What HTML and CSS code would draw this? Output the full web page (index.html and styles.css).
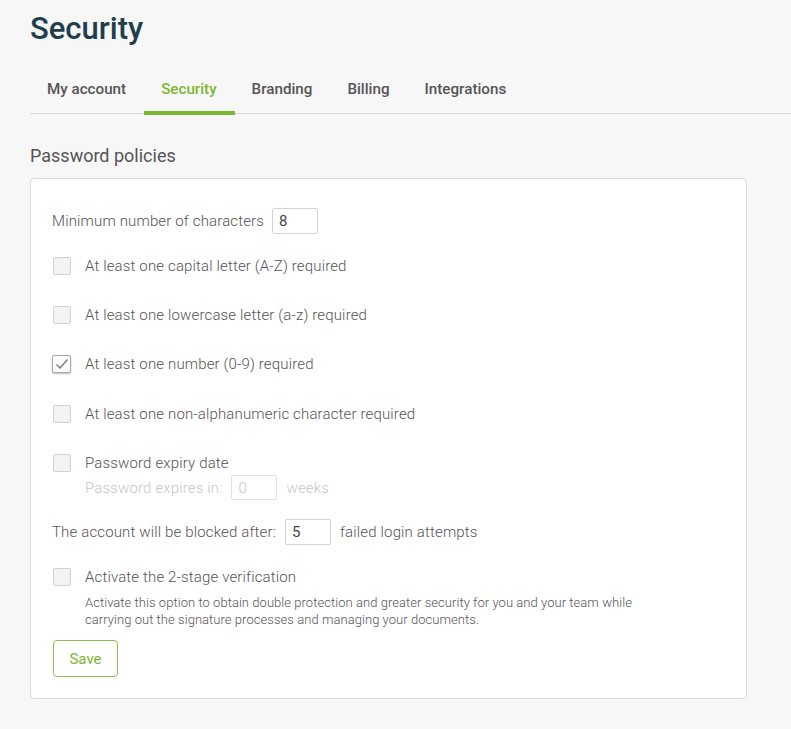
FILE: index.html
```html
<!DOCTYPE html>
<html lang="en">
<head>
<meta charset="utf-8">
<title>Security</title>
<link rel="stylesheet" href="styles.css">
</head>
<body>
<div class="page">
  <h1 class="title">Security</h1>
  <nav class="tabs">
    <a class="tab">My account</a>
    <a class="tab active">Security</a>
    <a class="tab">Branding</a>
    <a class="tab">Billing</a>
    <a class="tab">Integrations</a>
  </nav>
  <h2 class="section">Password policies</h2>
  <div class="card">
    <div class="row row-min">
      <span class="lbl">Minimum number of characters</span>
      <span class="input">8</span>
    </div>
    <div class="opt o1"><span class="cb"></span><span class="olbl">At least one capital letter (A-Z) required</span></div>
    <div class="opt o2"><span class="cb"></span><span class="olbl">At least one lowercase letter (a-z) required</span></div>
    <div class="opt o2"><span class="cb checked"><svg width="14" height="12" viewBox="0 0 14 12"><path d="M1.5 6.5 L5 10 L12.5 1.5" fill="none" stroke="#7a7a7a" stroke-width="1.4"/></svg></span><span class="olbl">At least one number (0-9) required</span></div>
    <div class="opt o3"><span class="cb"></span><span class="olbl">At least one non-alphanumeric character required</span></div>
    <div class="opt o2"><span class="cb"></span><span class="olbl">Password expiry date</span></div>
    <div class="row row-exp">
      <span class="lbl muted">Password expires in:</span>
      <span class="input disabled">0</span>
      <span class="lbl muted">weeks</span>
    </div>
    <div class="row row-block">
      <span class="lbl">The account will be blocked after:</span>
      <span class="input">5</span>
      <span class="lbl">failed login attempts</span>
    </div>
    <div class="opt o4"><span class="cb"></span><span class="olbl">Activate the 2-stage verification</span></div>
    <p class="desc">Activate this option to obtain double protection and greater security for you and your team while carrying out the signature processes and managing your documents.</p>
    <button class="save">Save</button>
  </div>
</div>
</body>
</html>
```
FILE: styles.css
```css
* { box-sizing: border-box; }
html, body { margin: 0; padding: 0; }
body {
  background: #f7f7f7;
  font-family: Roboto, "Liberation Sans", Arial, sans-serif;
  color: #555;
}
.page { padding: 0 0 0 30px; }
.title {
  margin: 0;
  padding-top: 9px;
  font-size: 31px;
  line-height: 40px;
  font-weight: 500;
  color: #1f3e4b;
}
.tabs {
  display: flex;
  margin-top: 32px;
  border-bottom: 1px solid #d6d6d6;
}
.tab {
  padding: 0 18px 0 17px;
  font-size: 15.2px;
  font-weight: 500;
  color: #555;
  line-height: 16px;
  height: 34px;
  border-bottom: 4px solid transparent;
  margin-bottom: -2px;
}
.tab.active { color: #7cb82f; border-bottom-color: #7cb82f; }
.section {
  margin: 31px 0 0;
  font-size: 18px;
  font-weight: 400;
  line-height: 22px;
  color: #555;
}
.card {
  width: 717px;
  margin-top: 11px;
  background: #fff;
  border: 1px solid #dcdcdc;
  border-radius: 4px;
  padding: 29px 22px 21px;
  display: flex;
  flex-direction: column;
  align-items: flex-start;
}
.row { display: flex; align-items: center; font-size: 15px; font-weight: 300; letter-spacing: 0.15px; margin-left: -1px; }
.lbl { line-height: 18px; }
.muted { color: #c6c6c6; }
.input {
  display: inline-flex;
  align-items: center;
  width: 46px;
  height: 26px;
  border: 1px solid #d4d4d4;
  border-radius: 2px;
  padding-left: 6px;
  font-size: 15px;
  font-weight: 400;
  color: #444;
  background: #fff;
}
.input.disabled { color: #c6c6c6; border-color: #e2e2e2; height: 25px; font-weight: 300; }
.row-min .input { margin-left: 8px; }
.row-exp { margin-top: 3px; padding-left: 33px; }
.row-exp .input { margin: 0 9px 0 9px; }
.row-block { margin-top: 19px; }
.row-block .input { margin: 0 9px 0 9px; }
.opt { display: flex; align-items: center; height: 18px; font-size: 15px; font-weight: 300; letter-spacing: 0.15px; }
.o1 { margin-top: 23px; }
.o2 { margin-top: 31px; }
.o3 { margin-top: 32px; }
.o4 { margin-top: 23px; }
.cb {
  flex: none;
  width: 18px;
  height: 18px;
  background: #f3f3f3;
  border: 1px solid #d2d2d2;
  border-radius: 2px;
  display: inline-flex;
  align-items: center;
  justify-content: center;
}
.cb.checked {
  background: #fbfbfb;
  border-color: #a8a8a8;
  box-shadow: 0 1px 2px rgba(0,0,0,0.25);
  width: 19px;
  margin-left: -1px;
}
.olbl { margin-left: 14px; line-height: 18px; }
.desc {
  margin: 8px 0 0 32px;
  font-size: 13px;
  font-weight: 300;
  line-height: 17px;
  letter-spacing: 0.05px;
  width: 565px;
}
.save {
  margin-top: 12px;
  width: 65px;
  height: 37px;
  border: 1px solid #8cc24a;
  border-radius: 4px;
  background: #fff;
  color: #7cb82f;
  font-family: Roboto, "Liberation Sans", Arial, sans-serif;
  font-size: 15px;
  font-weight: 400;
  padding: 0;
}
```
